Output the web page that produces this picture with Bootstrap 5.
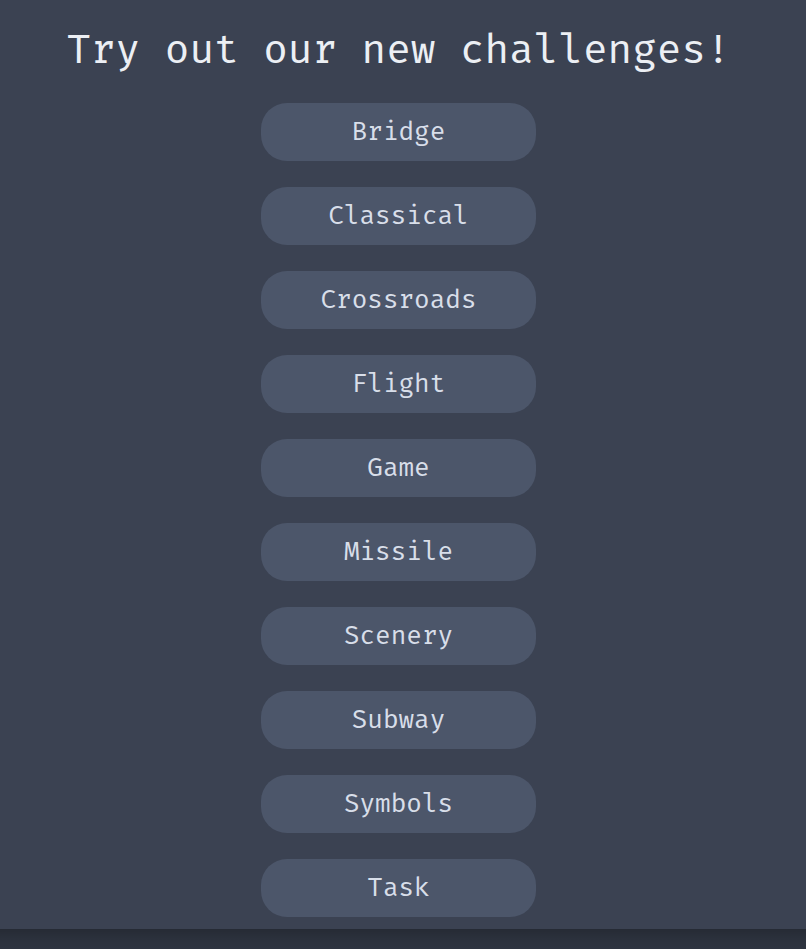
<!DOCTYPE html>
<html lang="en">
<head>
<meta charset="utf-8">
<meta name="viewport" content="width=device-width, initial-scale=1">
<title>Challenges</title>
<link href="https://cdn.jsdelivr.net/npm/bootstrap@5.3.0/dist/css/bootstrap.min.css" rel="stylesheet">
<style>
  body {
    background: #2e3440;
    color: #d8dee9;
    font-family: "Fira Mono", "Fira Code", "Liberation Mono", monospace;
  }
  .challenge-panel {
    background: #3b4252;
    padding: 25px 20px 12px 11px;
  }
  .challenge-title {
    color: #eceff4;
    font-size: 41px;
    font-weight: 400;
    line-height: 50px;
    margin-bottom: 28px;
  }
  .challenge-list { gap: 26px; }
  .challenge-link {
    background: #4c566a;
    border-radius: 26px;
    color: #d8dee9;
    font-size: 26px;
    font-weight: 400;
    line-height: 34px;
    padding: 12px;
    width: 275px;
  }
  .challenge-link:hover { background: #5e6a82; color: #eceff4; }
  .page-end {
    background: linear-gradient(rgba(0, 0, 0, .18), rgba(0, 0, 0, .04) 60%, rgba(0, 0, 0, 0));
    height: 20px;
  }
</style>
</head>
<body>
<main class="challenge-panel">
  <h1 class="challenge-title text-center">Try out our new challenges!</h1>
  <nav class="challenge-list d-flex flex-column align-items-center" aria-label="Challenges">
    <a class="challenge-link d-block text-center text-decoration-none" href="#bridge">Bridge</a>
    <a class="challenge-link d-block text-center text-decoration-none" href="#classical">Classical</a>
    <a class="challenge-link d-block text-center text-decoration-none" href="#crossroads">Crossroads</a>
    <a class="challenge-link d-block text-center text-decoration-none" href="#flight">Flight</a>
    <a class="challenge-link d-block text-center text-decoration-none" href="#game">Game</a>
    <a class="challenge-link d-block text-center text-decoration-none" href="#missile">Missile</a>
    <a class="challenge-link d-block text-center text-decoration-none" href="#scenery">Scenery</a>
    <a class="challenge-link d-block text-center text-decoration-none" href="#subway">Subway</a>
    <a class="challenge-link d-block text-center text-decoration-none" href="#symbols">Symbols</a>
    <a class="challenge-link d-block text-center text-decoration-none" href="#task">Task</a>
  </nav>
</main>
<footer class="page-end"></footer>
<script src="https://cdn.jsdelivr.net/npm/bootstrap@5.3.0/dist/js/bootstrap.bundle.min.js"></script>
</body>
</html>
